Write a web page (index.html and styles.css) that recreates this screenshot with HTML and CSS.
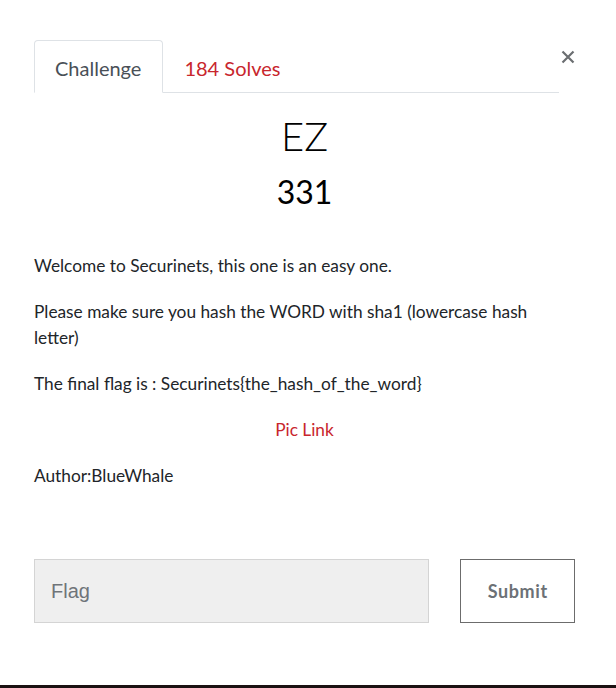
FILE: index.html
```html
<!DOCTYPE html>
<html>
<head>
<meta charset="utf-8">
<link rel="stylesheet" href="styles.css">
</head>
<body>
<div class="modal">
  <div class="tabs-row">
    <ul class="tabs">
      <li class="tab active">Challenge</li>
      <li class="tab link">184 Solves</li>
    </ul>
    <button class="close" aria-label="Close">
      <svg width="14" height="14" viewBox="0 0 14 14"><path d="M1.5 1.5 L12.5 12.5 M12.5 1.5 L1.5 12.5" stroke="#6b6e71" stroke-width="2.2" stroke-linecap="butt"/></svg>
    </button>
  </div>
  <h2 class="name">EZ</h2>
  <h3 class="value">331</h3>
  <div class="desc">
    <p>Welcome to Securinets, this one is an easy one.</p>
    <p>Please make sure you hash the WORD with sha1 (lowercase hash letter)</p>
    <p>The final flag is : Securinets{the_hash_of_the_word}</p>
    <p class="center"><a href="#">Pic Link</a></p>
    <p>Author:BlueWhale</p>
  </div>
  <div class="form">
    <input class="flag" type="text" placeholder="Flag">
    <button class="submit">Submit</button>
  </div>
</div>
<div class="backdrop-edge"></div>
</body>
</html>
```
FILE: styles.css
```css
html, body {
  margin: 0;
  padding: 0;
  background: #fff;
  height: 688px;
  overflow: hidden;
}
body {
  font-family: Lato, "Open Sans", sans-serif;
  color: #212529;
  display: flex;
  flex-direction: column;
}
.modal {
  flex: 1;
  padding: 40px 41px 0 34px;
}
.tabs-row {
  position: relative;
}
.tabs {
  list-style: none;
  margin: 0;
  padding: 0;
  display: flex;
  border-bottom: 1px solid #dee2e6;
  margin-right: 16px;
}
.tab {
  font-size: 20px;
  line-height: 24px;
  padding: 15px 21px 12px 20px;
  border: 1px solid transparent;
  border-top-left-radius: 4px;
  border-top-right-radius: 4px;
  margin-bottom: -1px;
}
.tab.active {
  color: #495057;
  border-color: #dee2e6 #dee2e6 #fff;
  background: #fff;
}
.tab.link {
  color: #c8262d;
}
.close {
  position: absolute;
  right: 0;
  top: 10px;
  border: 0;
  background: none;
  padding: 0;
  width: 14px;
  height: 14px;
  display: block;
}
.close svg { display: block; }
.name {
  text-align: center;
  font-weight: 300;
  font-size: 40px;
  line-height: 48px;
  margin: 19px 0 0;
  color: #000;
}
.value {
  text-align: center;
  font-weight: 400;
  font-size: 32px;
  line-height: 40px;
  margin: 12px 0 0;
  color: #000;
}
.desc {
  margin-top: 41px;
  font-size: 17.3px;
  line-height: 26px;
}
.desc p {
  margin: 0 0 20px;
}
.desc p:last-child { margin-bottom: 0; }
.desc .center { text-align: center; }
.desc a {
  color: #c8262d;
  text-decoration: none;
}
.form {
  display: flex;
  margin-top: 70px;
  gap: 31px;
}
.flag {
  width: 397px;
  height: 64px;
  box-sizing: border-box;
  background: #efefef;
  border: 1px solid #d4d4d4;
  padding: 0 16px;
  font-family: "Liberation Sans", Arial, sans-serif;
  font-size: 20px;
  color: #495057;
  outline: none;
}
.flag::placeholder { color: #6f7479; }
.submit {
  width: 115px;
  height: 64px;
  box-sizing: border-box;
  background: #fff;
  border: 1px solid #6c6c6c;
  font-family: Lato, sans-serif;
  font-weight: 700;
  font-size: 18px;
  color: #6c7176;
  letter-spacing: 0.6px;
}
.backdrop-edge {
  height: 3px;
  background: #1b1112;
}
```
